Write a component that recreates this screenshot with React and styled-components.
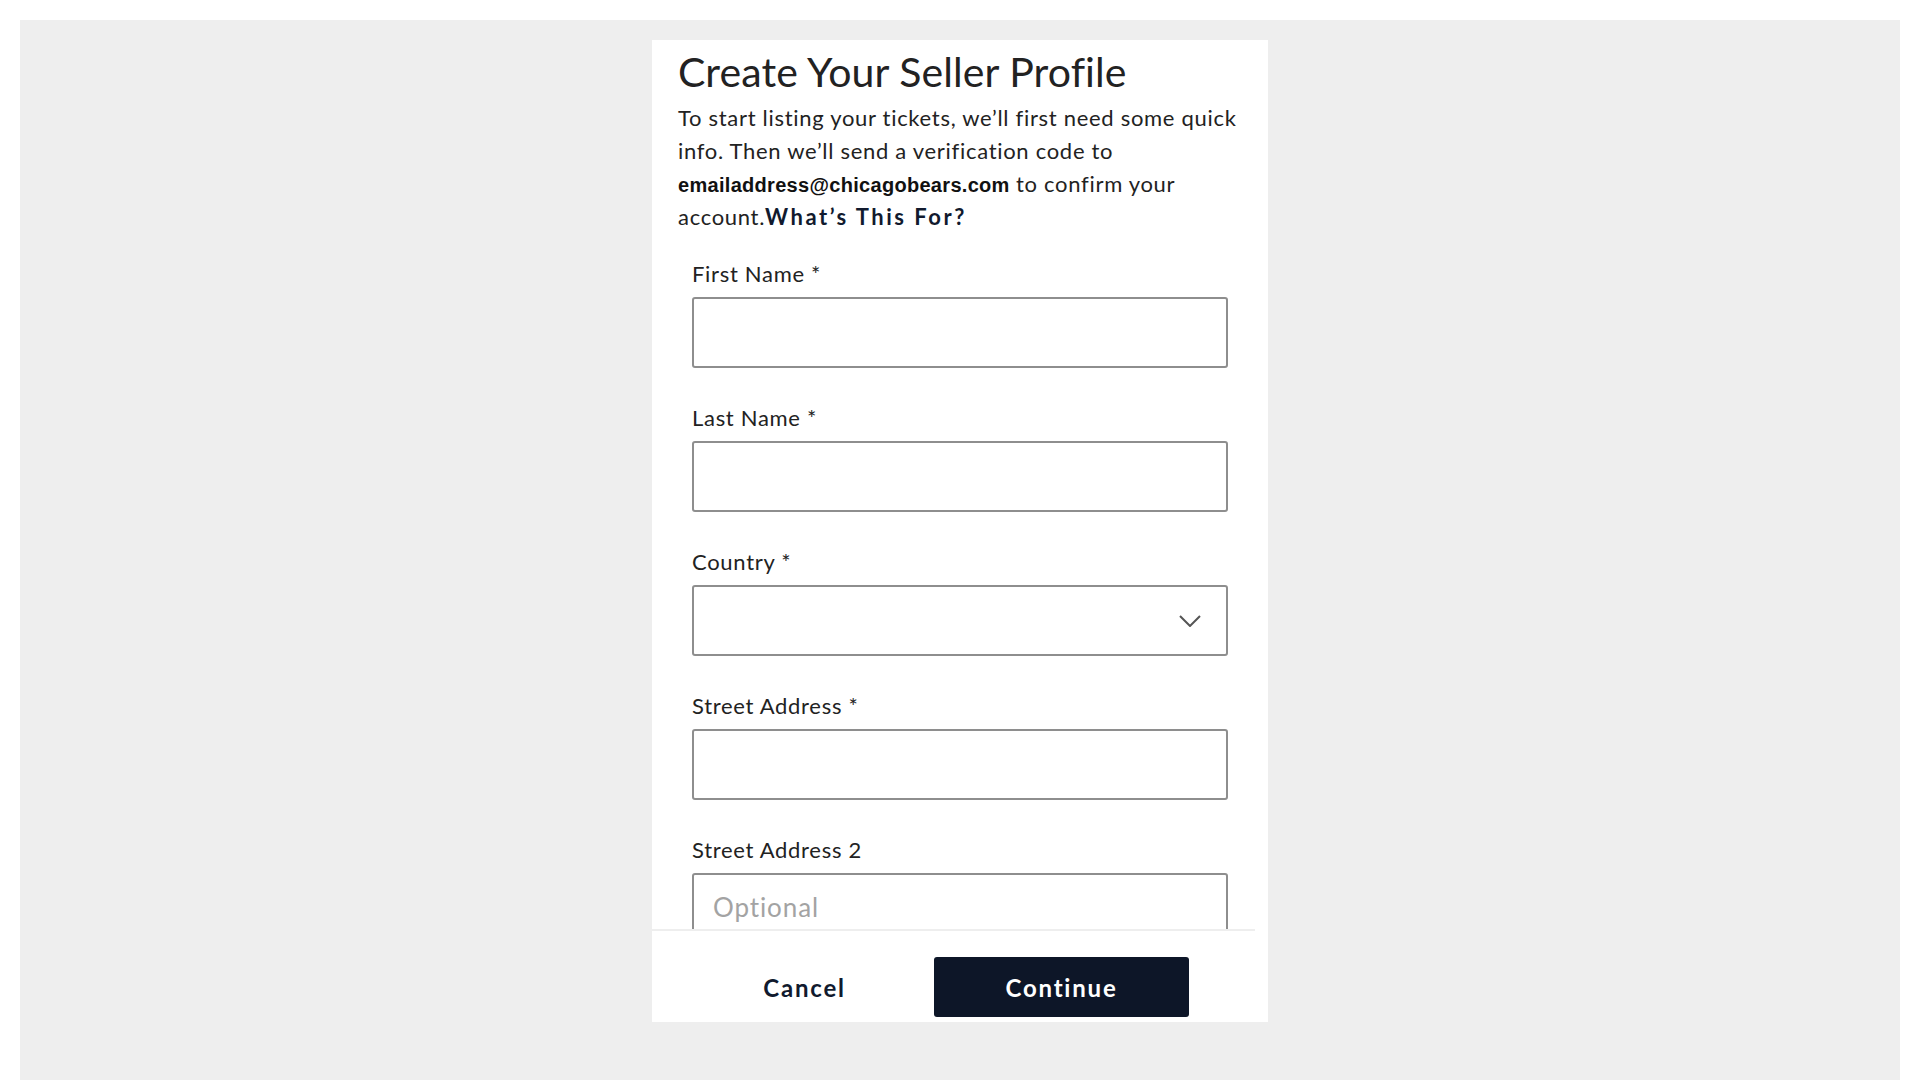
import React from "react";
import styled, { createGlobalStyle } from "styled-components";

const GlobalStyle = createGlobalStyle`
  html, body {
    margin: 0;
    padding: 0;
    background: #ffffff;
  }
  body {
    font-family: Lato, "Open Sans", sans-serif;
    color: #1f1f1f;
  }
  * {
    box-sizing: border-box;
  }
`;

const Page = styled.div`
  padding: 20px 20px 0;
  height: 1080px;
`;

const Backdrop = styled.div`
  height: 100%;
  background: #eeeeee;
  display: flex;
  justify-content: center;
  align-items: flex-start;
  padding-top: 20px;
`;

const Card = styled.div`
  width: 616px;
  height: 982px;
  background: #ffffff;
  display: flex;
  flex-direction: column;
`;

const Scroll = styled.div`
  flex: 1;
  overflow: hidden;
  padding: 8px 26px 0;
`;

const Title = styled.h1`
  margin: 0;
  font-size: 41px;
  line-height: 48px;
  font-weight: 400;
  letter-spacing: 0.1px;
  color: #222222;
`;

const Intro = styled.p`
  margin: 5px 0 0;
  font-size: 22px;
  line-height: 33px;
  letter-spacing: 0.7px;
  color: #222222;
`;

const Email = styled.strong`
  font-family: "Liberation Sans", Arial, sans-serif;
  font-weight: 700;
  font-size: 20px;
  line-height: 1;
  letter-spacing: 0.3px;
  color: #111111;
`;

const HelpLink = styled.a`
  font-weight: 700;
  color: #111a2e;
  letter-spacing: 2.5px;
  text-decoration: none;
  cursor: pointer;
`;

const Fields = styled.div`
  padding: 27px 0 0 14px;
  display: flex;
  flex-direction: column;
  gap: 36px;
`;

const Field = styled.label`
  display: flex;
  flex-direction: column;
  gap: 9px;
`;

const Label = styled.span`
  font-size: 22px;
  line-height: 28px;
  letter-spacing: 0.7px;
  color: #222222;
`;

const Box = styled.div`
  position: relative;
  width: 536px;
  height: 71px;
  border: 2px solid #8e8e8e;
  border-radius: 3px;
  background: #ffffff;
`;

const Input = styled.input`
  width: 100%;
  height: 100%;
  border: 0;
  outline: none;
  background: transparent;
  padding: 0 19px 3px;
  font-family: Lato, "Open Sans", sans-serif;
  font-size: 26px;
  letter-spacing: 0.9px;
  color: #222222;

  &::placeholder {
    color: #a3a3a3;
  }
`;

const Chevron = styled.svg`
  position: absolute;
  right: 25px;
  top: 50%;
  margin-top: -6px;
`;

const Footer = styled.div`
  border-top: 2px solid #eeeeee;
  margin-right: 13px;
  padding: 26px 0 5px 25px;
  display: flex;
  gap: 2px;
`;

const Button = styled.button`
  width: 255px;
  height: 60px;
  border: 0;
  border-radius: 3px;
  font-family: Lato, "Open Sans", sans-serif;
  font-size: 24px;
  font-weight: 700;
  letter-spacing: 1.8px;
  cursor: pointer;
  background: ${(p) => (p.$primary ? "#0d1628" : "transparent")};
  color: ${(p) => (p.$primary ? "#ffffff" : "#111a2e")};
`;

function TextField({ label, placeholder, select }) {
  return (
    <Field>
      <Label>{label}</Label>
      <Box>
        <Input placeholder={placeholder} readOnly={select} />
        {select && (
          <Chevron width="22" height="12" viewBox="0 0 22 12" fill="none">
            <path d="M1 1l10 10 10-10" stroke="#555555" strokeWidth="2" />
          </Chevron>
        )}
      </Box>
    </Field>
  );
}

export default function App() {
  return (
    <>
      <GlobalStyle />
      <Page>
        <Backdrop>
          <Card>
            <Scroll>
              <Title>Create Your Seller Profile</Title>
              <Intro>
                To start listing your tickets, we’ll first need some quick info.
                Then we’ll send a verification code to{" "}
                <Email>emailaddress@chicagobears.com</Email> to confirm your
                account.<HelpLink>What’s This For?</HelpLink>
              </Intro>
              <Fields>
                <TextField label="First Name *" />
                <TextField label="Last Name *" />
                <TextField label="Country *" select />
                <TextField label="Street Address *" />
                <TextField label="Street Address 2" placeholder="Optional" />
              </Fields>
            </Scroll>
            <Footer>
              <Button>Cancel</Button>
              <Button $primary>Continue</Button>
            </Footer>
          </Card>
        </Backdrop>
      </Page>
    </>
  );
}
